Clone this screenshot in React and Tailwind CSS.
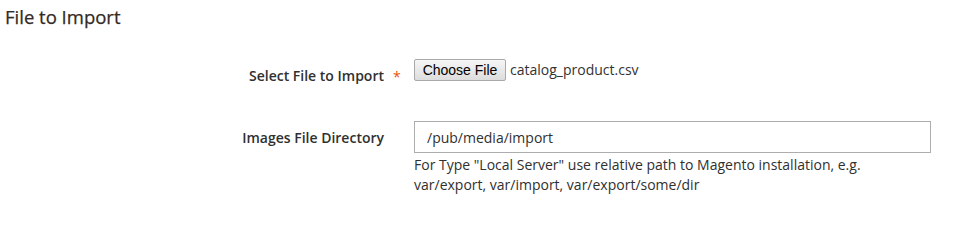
export default function App() {
  return (
    <div className="w-[970px] h-[247px] bg-white text-[#303030] [font-family:'Open_Sans',sans-serif]">
      <div className="pl-[5px] pt-[4px] text-[18.5px] font-normal leading-[25px] text-[#332a24] [-webkit-text-stroke:0.25px_#332a24]">File to Import</div>
      <div className="mt-[30px] flex items-start">
        <div className="w-[384px] text-right text-[14px] font-semibold leading-[20px] pt-[7px]">Select File to Import</div>
        <div className="relative w-[30px]">
          <span className="absolute left-[9px] top-[8px] text-[14px] leading-[20px] text-[#eb5202]">*</span>
        </div>
        <div className="flex items-center">
          <button className="h-[22px] w-[92px] border border-[#a9a9a9] rounded-[2px] bg-gradient-to-b from-[#f6f6f6] to-[#dddddd] text-[14px] leading-[16px] text-black [font-family:'Liberation_Sans',Arial,sans-serif]">Choose File</button>
          <span className="ml-[4px] -mt-[2px] text-[14px] text-[#333333]">catalog_product.csv</span>
        </div>
      </div>
      <div className="mt-[35px] flex items-start">
        <div className="w-[384px] text-right text-[14px] font-semibold leading-[20px] pt-[7px]">Images File Directory</div>
        <div className="w-[30px]"></div>
        <div className="w-[517px]">
          <div className="h-[32px] border border-[#adadad] px-[12px] flex items-center text-[14px] text-[#303030]">/pub/media/import</div>
          <div className="mt-[2px] text-[14px] leading-[20px] text-[#303030]">
            For Type "Local Server" use relative path to Magento installation, e.g.<br />
            var/export, var/import, var/export/some/dir
          </div>
        </div>
      </div>
    </div>
  );
}
